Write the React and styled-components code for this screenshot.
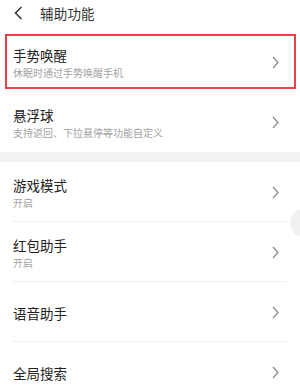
import React from "react";
import styled, { createGlobalStyle } from "styled-components";

const GlobalStyle = createGlobalStyle`
  html, body {
    margin: 0;
    padding: 0;
    background: #ffffff;
    font-family: "Noto Sans CJK SC", "Noto Sans", sans-serif;
  }
`;

const Page = styled.div`
  position: relative;
  width: 300px;
  height: 388px;
  overflow: hidden;
  background: #ffffff;
`;

const Header = styled.header`
  height: 32px;
  display: flex;
  align-items: center;
  padding-left: 14px;
  padding-bottom: 7px;
  box-sizing: border-box;
`;

const BackButton = styled.div`
  width: 26px;
  height: 14px;
  display: flex;
  align-items: center;
`;

const Title = styled.h1`
  margin: 0;
  font-size: 13.5px;
  font-weight: 400;
  color: #333333;
  letter-spacing: 0.2px;
`;

const Group = styled.section`
  display: flex;
  flex-direction: column;
`;

const Band = styled.div`
  height: 10px;
  background: #f3f3f3;
`;

const Row = styled.div`
  position: relative;
  height: 60px;
  display: flex;
  align-items: center;
  padding: 1px 21px 0 13px;
  box-sizing: border-box;

  ${(p) =>
    p.$divider &&
    `
    &::before {
      content: "";
      position: absolute;
      left: 13px;
      right: 13px;
      bottom: 0;
      height: 1px;
      background: #efefef;
    }
  `}

  ${(p) =>
    p.$highlight &&
    `
    &::after {
      content: "";
      position: absolute;
      top: 2px;
      left: 5px;
      right: 4px;
      bottom: 3px;
      border: 2px solid #e5424b;
      pointer-events: none;
    }
  `}
`;

const Texts = styled.div`
  flex: 1;
  display: flex;
  flex-direction: column;
  gap: 2px;
`;

const Name = styled.div`
  font-size: 13.5px;
  line-height: 18px;
  color: #222222;
`;

const Sub = styled.div`
  font-size: 10px;
  line-height: 14px;
  color: #a3a3a3;
`;

const FloatBall = styled.div`
  position: absolute;
  left: 290px;
  top: 209px;
  width: 28px;
  height: 28px;
  border-radius: 50%;
  background: #f0f0f0;
`;

const Chevron = () => (
  <svg width="7" height="13" viewBox="0 0 7 13">
    <path d="M1 1 L6 6.5 L1 12" fill="none" stroke="#8c8c8c" strokeWidth="1.3" />
  </svg>
);

const BackIcon = () => (
  <svg width="9" height="14" viewBox="0 0 9 14">
    <path d="M7.5 1 L1.5 7 L7.5 13" fill="none" stroke="#333333" strokeWidth="1.5" />
  </svg>
);

const Item = ({ name, sub, highlight, divider }) => (
  <Row $highlight={highlight} $divider={divider}>
    <Texts>
      <Name>{name}</Name>
      {sub && <Sub>{sub}</Sub>}
    </Texts>
    <Chevron />
  </Row>
);

export default function App() {
  return (
    <>
      <GlobalStyle />
      <Page>
        <Header>
          <BackButton>
            <BackIcon />
          </BackButton>
          <Title>辅助功能</Title>
        </Header>
        <Group>
          <Item name="手势唤醒" sub="休眠时通过手势唤醒手机" highlight />
          <Item name="悬浮球" sub="支持返回、下拉悬停等功能自定义" />
        </Group>
        <Band />
        <Group>
          <Item name="游戏模式" sub="开启" divider />
          <Item name="红包助手" sub="开启" divider />
          <Item name="语音助手" divider />
          <Item name="全局搜索" />
        </Group>
        <FloatBall />
      </Page>
    </>
  );
}
